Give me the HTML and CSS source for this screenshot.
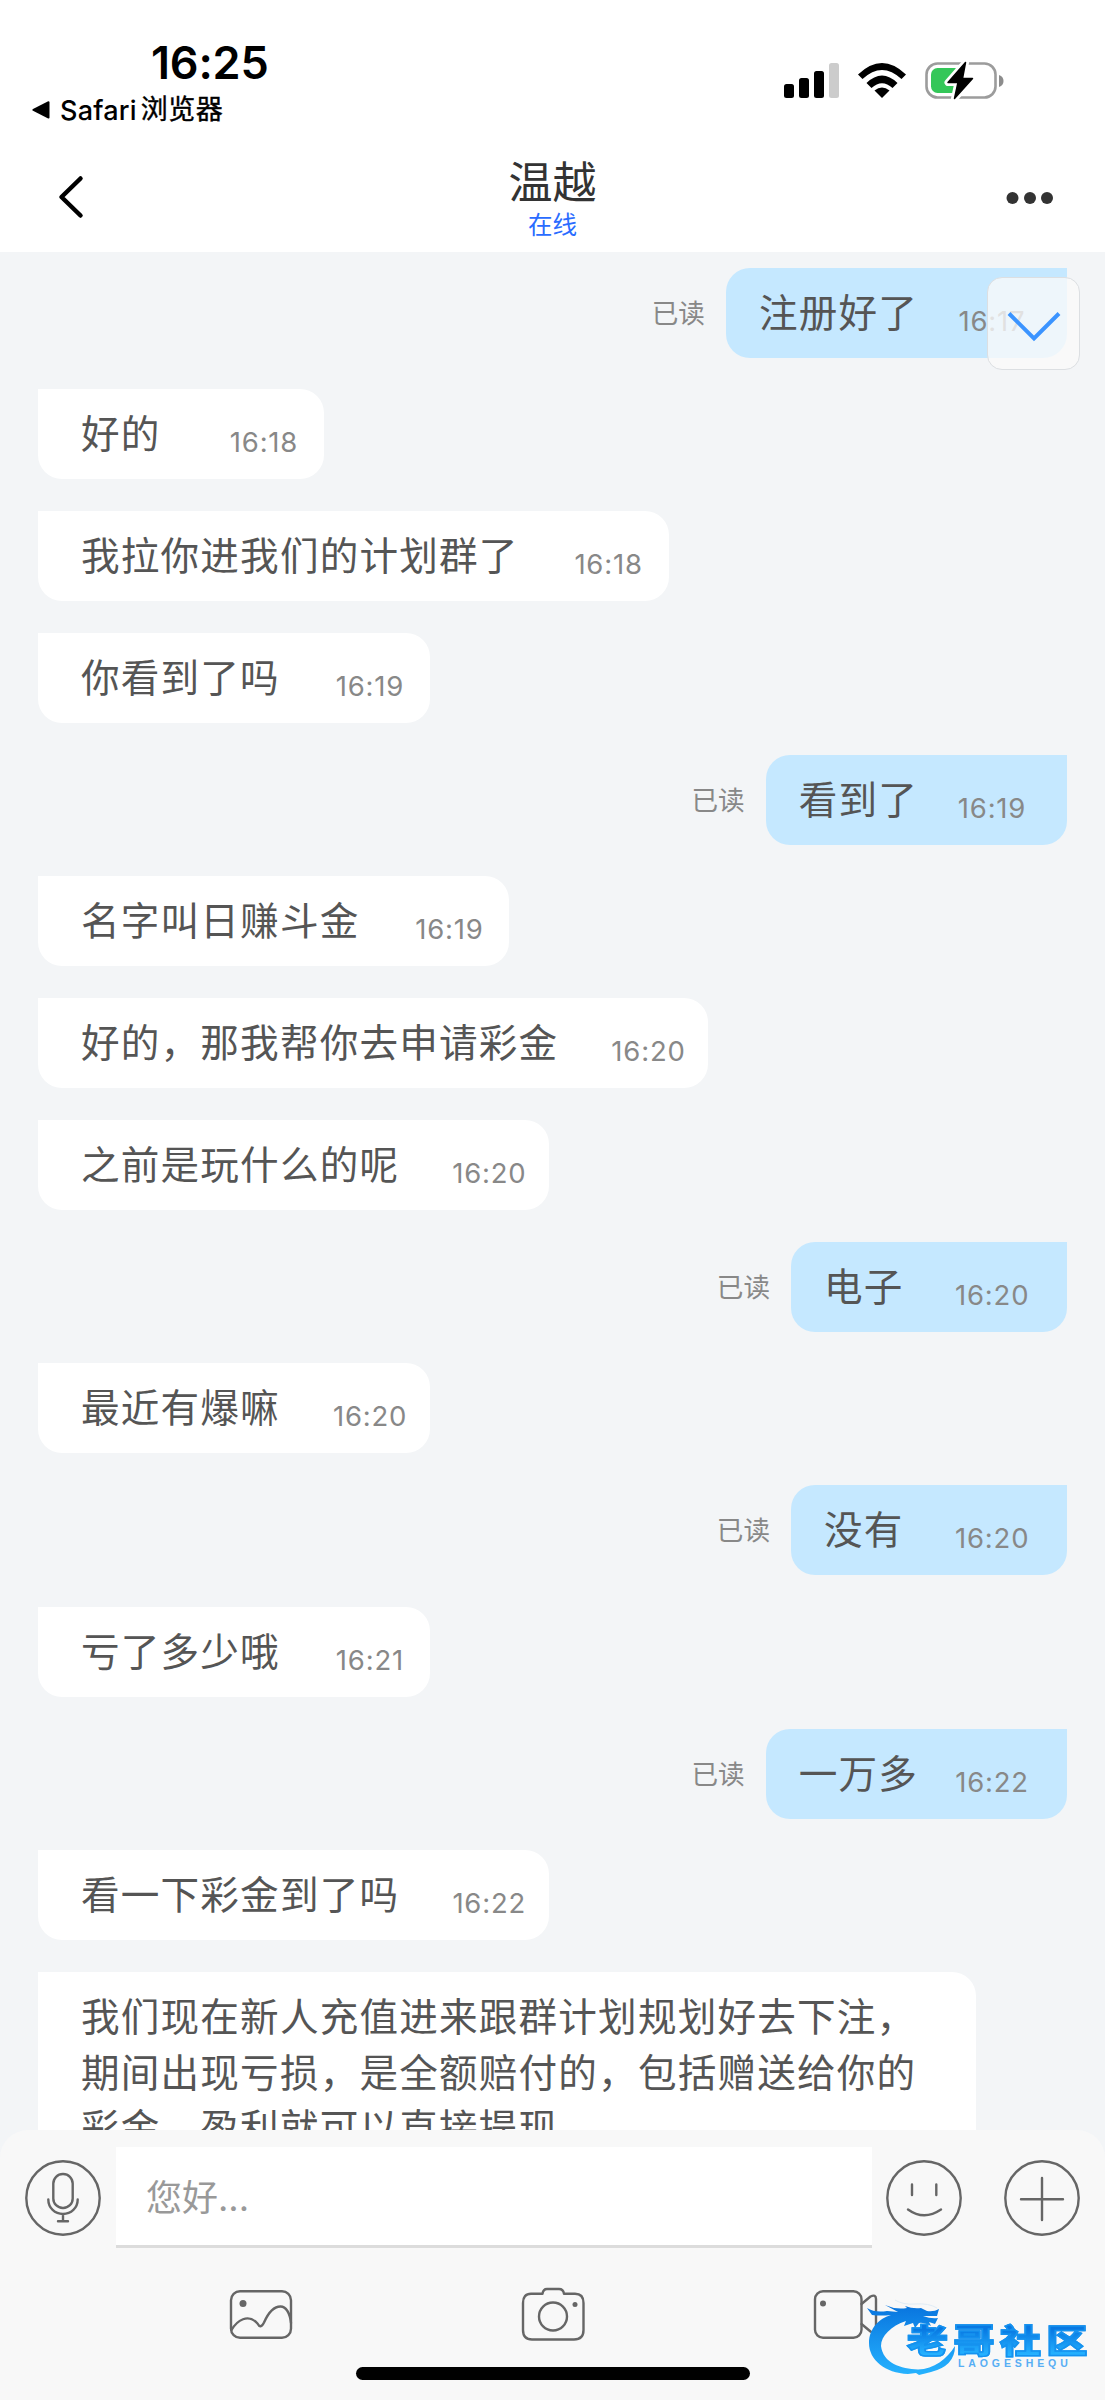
FILE: index.html
```html
<!DOCTYPE html>
<html lang="zh-CN">
<head>
<meta charset="utf-8">
<title>温越</title>
<link rel="stylesheet" href="styles.css">
</head>
<body>
<div class="screen">
  <header class="top">
    <div class="status">
      <div class="status-left">
        <div class="clock">16:25</div>
        <div class="return"><svg width="18" height="18" viewBox="0 0 18 18"><path d="M1 9.8Q-.3 9 1 8.1L15.700.5Q17.500-.2 17.500 1.500V16.500Q17.500 18 15.700 17.300Z"/></svg><span class="return-app">Safari</span><span class="return-kind">浏览器</span></div>
      </div>
      <svg class="status-icons" width="222" height="40" viewBox="0 0 222 40">
        <rect x="2" y="24" width="10" height="14" rx="2.500"/>
        <rect x="17" y="18" width="10" height="20" rx="2.500"/>
        <rect x="32" y="11" width="10" height="27" rx="2.500"/>
        <rect x="47" y="3" width="10" height="35" rx="2.500" fill="#ccc"/>
        <path d="M76 14.500Q100-8.500 124 14.500L119.500 19Q100 .8 80.500 19Z"/>
        <path d="M84.500 23Q100 8 115.500 23L110.500 28Q100 18.500 89.500 28Z"/>
        <path d="M92.500 30.500Q100 24.500 107.500 30.500L100 38Z"/>
        <rect x="144.500" y="3.500" width="69" height="34" rx="11" fill="none" stroke="#9c9c9c" stroke-width="2.600"/>
        <path d="M217 15Q221.500 16.500 221.500 21T217 27Z" fill="#8c8c8c"/>
        <rect x="149" y="8" width="30" height="25" rx="6.500" fill="#34c759"/>
        <path d="M183.500 2.500L166 22.500H176L172.500 38.500L190.500 18.500H180.500Z" fill="#fff" stroke="#fff" stroke-width="7" stroke-linejoin="round"/>
        <path d="M183.500 2.500L166 22.500H176L172.500 38.500L190.500 18.500H180.500Z" stroke="#000" stroke-width="1.500" stroke-linejoin="round"/>
      </svg>
    </div>
    <div class="nav">
      <svg class="back" width="28" height="46" viewBox="0 0 28 46"><path d="M23.500 4.500L4.500 23L23.500 41.500"/></svg>
      <div class="who"><div class="name">温越</div><div class="online">在线</div></div>
      <svg class="more" width="48" height="14" viewBox="0 0 48 14"><circle cx="6.500" cy="7" r="6"/><circle cx="24" cy="7" r="6"/><circle cx="41" cy="7" r="6"/></svg>
    </div>
  </header>

  <main class="chat">
    <div class="row mine"><span class="read">已读</span><div class="bubble"><p>注册好了</p><time>16:17</time></div></div>
    <div class="row"><div class="bubble"><p>好的</p><time>16:18</time></div></div>
    <div class="row"><div class="bubble"><p>我拉你进我们的计划群了</p><time>16:18</time></div></div>
    <div class="row"><div class="bubble"><p>你看到了吗</p><time>16:19</time></div></div>
    <div class="row mine"><span class="read">已读</span><div class="bubble"><p>看到了</p><time>16:19</time></div></div>
    <div class="row"><div class="bubble"><p>名字叫日赚斗金</p><time>16:19</time></div></div>
    <div class="row"><div class="bubble"><p>好的，那我帮你去申请彩金</p><time>16:20</time></div></div>
    <div class="row"><div class="bubble"><p>之前是玩什么的呢</p><time>16:20</time></div></div>
    <div class="row mine"><span class="read">已读</span><div class="bubble"><p>电子</p><time>16:20</time></div></div>
    <div class="row"><div class="bubble"><p>最近有爆嘛</p><time>16:20</time></div></div>
    <div class="row mine"><span class="read">已读</span><div class="bubble"><p>没有</p><time>16:20</time></div></div>
    <div class="row"><div class="bubble"><p>亏了多少哦</p><time>16:21</time></div></div>
    <div class="row mine"><span class="read">已读</span><div class="bubble"><p>一万多</p><time>16:22</time></div></div>
    <div class="row"><div class="bubble"><p>看一下彩金到了吗</p><time>16:22</time></div></div>
    <div class="row"><div class="bubble long"><p>我们现在新人充值进来跟群计划规划好去下注，<br>期间出现亏损，是全额赔付的，包括赠送给你的<br>彩金，盈利就可以直接提现</p></div></div>
    <div class="jump"><svg width="56" height="32" viewBox="0 0 56 32"><path d="M3 3.500L28 28.500L53 3.500"/></svg></div>
  </main>

  <footer class="composer">
    <div class="entry">
      <svg class="icon mic" width="78" height="78" viewBox="0 0 78 78"><circle cx="39" cy="39" r="36.700"/><rect x="29.300" y="15" width="19.400" height="34" rx="9.500"/><path d="M24.300 40.500C24.300 49 31 55 39 55S53.700 49 53.700 40.500M39 55V62M34 62.300H44"/></svg>
      <div class="field">您好...</div>
      <svg class="icon smile" width="78" height="78" viewBox="0 0 78 78"><circle cx="39" cy="39" r="36.700"/><path d="M27 25.500V36M51.300 25.500V36M23 50.500Q39 62 56 50.500"/></svg>
      <svg class="icon plus" width="78" height="78" viewBox="0 0 78 78"><circle cx="39" cy="39" r="36.700"/><path d="M39 19V61M18 40.300H60"/></svg>
    </div>
    <div class="tools">
      <svg class="icon" width="66" height="56" viewBox="0 0 66 56"><rect x="3" y="5.300" width="60" height="46.500" rx="9"/><path d="M3.500 44C9 34.500 20 27 29.500 37.500Q32.500 43.500 36 36.500C42 23 48 20.500 52.500 20.500C58 20.500 62 27 63 37"/><circle class="dot" cx="15" cy="17.500" r="3.500"/></svg>
      <svg class="icon" width="66" height="56" viewBox="0 0 66 56"><path d="M11 7.800H22.500C23 4.500 24.500 3 27 3H39C42 3 43.500 4.500 44 7.800H55Q63.500 7.800 63.500 17V44Q63.500 53.500 54 53.500H12Q3 53.500 3 44V17Q3 7.800 11 7.800Z"/><circle cx="33" cy="30.500" r="14"/><circle class="dot" cx="55" cy="18.500" r="2.500"/></svg>
      <svg class="icon" width="66" height="56" viewBox="0 0 66 56"><rect x="3" y="5.300" width="46.500" height="46.500" rx="8"/><path d="M49.500 18L58.500 10.500Q64 8 64 13V44Q64 49 58.500 45.500L49.500 38"/><circle class="dot" cx="11" cy="17.500" r="3"/></svg>
    </div>
    <div class="home"></div>
  </footer>

  <div class="mark">
    <svg width="230" height="84" viewBox="0 0 230 84">
      <defs><linearGradient id="sea" x1="0" y1="0" x2="0" y2="1"><stop offset="0" stop-color="#0874de"/><stop offset="1" stop-color="#26b3ff"/></linearGradient></defs>
      <path fill="url(#sea)" d="M2 12Q10 17 22 15L33 16L20 9Q31 14 42 12L40 10Q48 13 56 12L62 15Q69 16 74 13L72 20L58 20Q66 23 73 22L70 28L64 26L66 30Q58 26 54 27L50 32L48 27L39 30L41 25C26 30 16 40 16 50C18 67 36 73 53 73.500C69 73 82 63 90 50Q90 70 66 76L54 79L51 77L43 78C20 77 4 64 4 47C4 32 15 22 26 19Q15 20 7 19Z"/>
      <path d="M30 4Q38 9 50 8Q64 7 72 12" fill="none" stroke="#e0ecf6" stroke-width="1"/>
    </svg>
    <div class="mark-words"><div class="mark-name">老哥社区</div><div class="mark-latin">LAOGESHEQU</div></div>
  </div>
</div>
</body>
</html>
```
FILE: styles.css
```css
* { box-sizing: border-box; }
body { margin: 0; }
p { margin: 0; }
.screen {
  position: relative;
  display: flex;
  flex-direction: column;
  width: 1105px;
  height: 2400px;
  overflow: hidden;
  background: #f3f5f7;
  font-family: Inter, "Noto Sans CJK SC", sans-serif;
}
.top { flex: none; height: 252px; background: #fff; }
.status { display: flex; justify-content: space-between; height: 136px; padding: 0 101px 0 32px; }
.status-left { padding-top: 35px; }
.clock { padding-left: 119px; font-size: 45px; line-height: 56px; font-weight: 600; letter-spacing: -.2px; }
.return { display: flex; align-items: center; height: 38px; font-size: 27px; font-weight: 500; }
.return-app { margin-left: 10px; letter-spacing: .2px; }
.return-kind { margin-left: 4px; line-height: 34px; letter-spacing: .5px; font-weight: 400; -webkit-text-stroke: .4px #000; }
.status-icons { margin-top: 60px; }
.nav { display: grid; grid-template-columns: 150px 1fr 150px; height: 116px; }
.back { margin: 38px 0 0 57px; fill: none; stroke: #000; stroke-width: 4.5px; stroke-linecap: round; stroke-linejoin: round; }
.who { text-align: center; }
.name { margin-top: 19px; color: #333; font-size: 44px; line-height: 56px; }
.online { color: #2a6cff; font-size: 24.500px; line-height: 28px; }
.more { margin: 55px 0 0 51px; fill: #333; }

.chat { position: relative; flex: 1; min-height: 0; overflow: hidden; padding: 15.500px 38px 0; }
.row { display: flex; align-items: center; height: 90px; margin-bottom: 31.750px; }
.mine { justify-content: flex-end; }
.bubble {
  display: flex;
  justify-content: space-between;
  min-width: 286px;
  height: 90px;
  padding: 18px 23px 0 43px;
  gap: 53px;
  border-radius: 0 24px 24px 24px;
  background: #fff;
  color: #555;
}
.bubble p { font-size: 38.600px; line-height: 55.700px; letter-spacing: 1.200px; white-space: nowrap; }
.bubble time { width: 74px; margin-top: 16px; color: #888; font-size: 27.500px; line-height: 38px; letter-spacing: .8px; text-align: center; white-space: nowrap; }
.mine .bubble { min-width: 276px; padding: 18px 38px 0 33px; gap: 37px; border-radius: 24px 0 24px 24px; background: #c5e8ff; }
.read { margin-right: 21px; color: #888; font-size: 26.600px; line-height: 38px; }
.long { align-self: flex-start; width: 938px; height: 260px; }
.jump {
  position: absolute;
  top: 25px;
  right: 25px;
  display: flex;
  align-items: center;
  justify-content: center;
  width: 93px;
  height: 93px;
  border: 1px solid #dcdfe2;
  border-radius: 15px;
  background: rgba(250, 250, 250, .78);
}
.jump svg { margin-top: 5px; fill: none; stroke: #3b94ff; stroke-width: 4px; }

.composer { flex: none; height: 270px; border-radius: 28px 28px 0 0; background: #f8f8f8; }
.icon { fill: none; stroke: #666; stroke-width: 2.400px; stroke-linecap: round; stroke-linejoin: round; }
.dot { fill: #666; stroke: none; }
.entry { display: flex; align-items: flex-start; height: 139px; padding: 17px 24px 0; }
.entry .icon { flex: none; margin-top: 11.500px; }
.field { width: 756px; height: 101px; margin-left: 14px; padding: 2px 30px 0; border-bottom: 3px solid #dcdcdc; background: #fff; color: #999; font-size: 36px; line-height: 98px; }
.entry .smile { margin-left: 13px; }
.entry .plus { margin-left: 40px; }
.tools { display: grid; grid-template-columns: repeat(3, 66px); column-gap: 226px; padding: 16.500px 0 0 227.500px; }
.home { width: 394px; height: 13px; margin: 25.500px auto 0; border-radius: 7px; background: #000; }

.mark { position: absolute; left: 865px; top: 2296px; display: grid; }
.mark svg, .mark-words { grid-area: 1 / 1; }
.mark-words { padding: 28px 0 0 42px; }
.mark-name {
  width: max-content;
  background: linear-gradient(#0878e2 15%, #25b2ff 90%);
  background-clip: text;
  color: transparent;
  -webkit-text-stroke: 1.500px #1592ef;
  font-size: 33px;
  line-height: 34px;
  font-weight: 900;
  letter-spacing: 4.500px;
  white-space: nowrap;
  transform: scaleX(1.24);
  transform-origin: left;
}
.mark-latin { padding-left: 51px; color: #57aef4; font: bold 10.500px/11px "Liberation Sans", sans-serif; letter-spacing: 3.900px; }
```
